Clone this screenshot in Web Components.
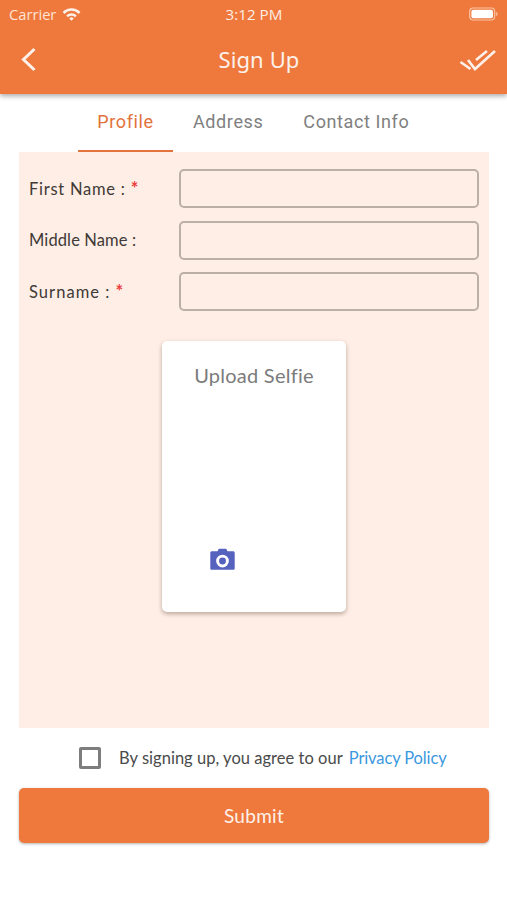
<!DOCTYPE html>
<html><head><meta charset="utf-8">
<style>html,body{margin:0;padding:0;background:#fff}body{width:507px;height:900px;overflow:hidden;font-family:Lato,"Noto Sans",sans-serif}</style>
</head><body>
<app-header></app-header>
<tab-bar></tab-bar>
<profile-panel>
  <field-row required style="--ls:.75px">First Name :</field-row>
  <field-row style="--ls:.12px">Middle Name :</field-row>
  <field-row required style="--ls:1.05px">Surname :</field-row>
  <selfie-card></selfie-card>
</profile-panel>
<agree-row></agree-row>
<submit-button>Submit</submit-button>
<script>
function def(name, html){
  customElements.define(name, class extends HTMLElement{
    constructor(){super();this.attachShadow({mode:'open'}).innerHTML=html;}
  });
}
def('app-header',`<style>
:host{display:block;position:relative;z-index:2;height:94px;background:#ef793d;box-shadow:0 2px 5px rgba(0,0,0,.35);color:#fff}
.status{height:28px;padding:0 8px 0 9px;display:grid;grid-template-columns:1fr auto 1fr;align-items:center;font:14px "Open Sans",sans-serif}
.l{display:flex;align-items:center;gap:6px;color:#fde3d3;font-size:14.7px}
.t{font-size:15.2px;font-weight:500;color:#fdeee5}
.r{display:flex;justify-content:flex-end}
.nav{height:66px;display:grid;grid-template-columns:1fr auto 1fr;align-items:center;padding:0 11px 0 20px}
.title{font:22px "Noto Sans",sans-serif;letter-spacing:.1px;color:#fdf1ea;transform:translate(1px,-2px)}
.back{display:block;transform:translateY(-1px)}.check{justify-self:end;display:block}
</style>
<div class="status"><div class="l"><span>Carrier</span>
<svg width="19" height="14" viewBox="0 0 19 14"><path d="M.6 5a12.400 12.400 0 0 1 17.800 0l-1.800 1.900a9.800 9.800 0 0 0-14.200 0z M4.200 8.400a7.600 7.600 0 0 1 10.600 0l-1.800 1.900a5 5 0 0 0-7 0z M7.300 11.400a3.200 3.200 0 0 1 4.400 0l-2.200 2.300z" fill="#fdf1ea"/></svg></div>
<div class="t">3:12 PM</div>
<div class="r"><svg width="30" height="14" viewBox="0 0 30 14"><rect x=".7" y="1" width="25" height="12" rx="3.5" fill="none" stroke="#f9c4a5" stroke-width="1.2"/><rect x="2.4" y="2.7" width="21.6" height="8.6" rx="2" fill="#fff"/><path d="M27.2 5v4c.9-.3 1.4-1 1.4-2s-.5-1.700-1.400-2z" fill="#f9c4a5"/></svg></div></div>
<div class="nav">
<svg class="back" width="17" height="26" viewBox="0 0 17 26"><path d="M14.500 2 3.500 12.500 14.500 23" fill="none" stroke="#fdf1ea" stroke-width="3"/></svg>
<div class="title">Sign Up</div>
<svg class="check" width="38" height="24" viewBox="0 0 38 24"><path d="M2.500 13 12.500 20M10 11 17 20 37 2M18 11 29 2" fill="none" stroke="#fdf1ea" stroke-width="2.600"/></svg>
</div>`);
def('tab-bar',`<style>
:host{display:flex;height:58px;padding-left:78px;box-sizing:border-box;font:18px Roboto,sans-serif;letter-spacing:.6px;color:#808080}
.tab{display:flex;align-items:center;justify-content:center;height:100%;box-sizing:border-box;border-bottom:2px solid transparent;padding-bottom:1px}
.a{width:95px;color:#e2733c;border-bottom-color:#e2733c;margin-right:20px}
.b{margin-right:40px}
</style><div class="tab a">Profile</div><div class="tab b">Address</div><div class="tab">Contact Info</div>`);
def('profile-panel',`<style>
:host{display:block;margin:0 18px 0 19px;height:576px;box-sizing:border-box;background:#feeee6;padding:17px 10px 0 10px}
</style><slot></slot>`);
def('field-row',`<style>
:host{display:grid;grid-template-columns:150px 300px;align-items:center;height:39px;margin-bottom:12.500px;color:#3f3a37}
.lab{white-space:nowrap;font:16.500px/20px Lato,sans-serif;letter-spacing:var(--ls,.5px);transform:translateY(-.5px)}
.req{color:#ee3b3b;margin-left:5px;display:none;font-size:18px;line-height:0;font-weight:700;letter-spacing:0}
:host([required]) .req{display:inline}
.in{height:39px;box-sizing:border-box;border:2px solid #bcafa6;border-radius:5px}
</style><div class="lab"><slot></slot><span class="req">*</span></div><div class="in"></div>`);
def('selfie-card',`<style>
:host{display:flex;flex-direction:column;align-items:flex-start;width:184px;height:271px;margin:30px 0 0 133px;box-sizing:border-box;background:#fff;border-radius:5px;box-shadow:0 2px 4px rgba(90,60,40,.4);padding:21px 0 0 0}
.t{align-self:center;font:20px Lato,sans-serif;letter-spacing:.25px;color:#7b7b7b;line-height:26px}
svg{margin:160px 0 0 48px;display:block}
</style><div class="t">Upload Selfie</div>
<svg width="25" height="23" viewBox="0 0 26 23"><path fill-rule="evenodd" d="M8.500 1.500C8.800.600 9.400.300 10 .300h6c.7 0 1.200.300 1.500 1.200L18.200 3H24c1 0 1.700.7 1.700 1.700v15.800c0 1-.7 1.700-1.700 1.700H2c-1 0-1.700-.7-1.700-1.700V4.700C.3 3.700 1 3 2 3h5.800zM13 6.500a6.600 6.600 0 1 0 0 13.200 6.600 6.600 0 0 0 0-13.200z" fill="#5563bf"/><circle cx="13" cy="13.100" r="3.600" fill="#5563bf"/></svg>`);
def('agree-row',`<style>
:host{display:flex;align-items:center;height:60px;padding-left:79px;font:16.500px Lato,sans-serif;letter-spacing:.03px;color:#4a4a4a}
.box{width:22px;height:22px;box-sizing:border-box;border:3px solid #7d7d7d;border-radius:2px;margin-right:18px;flex:none}
a{color:#3b98e0;margin-left:6px;letter-spacing:-.12px}
</style><div class="box"></div><span>By signing up, you agree to our</span><a>Privacy Policy</a>`);
def('submit-button',`<style>
:host{display:flex;align-items:center;justify-content:center;margin:0 18px 0 19px;height:55px;background:#ef793d;color:#fdf1ea;border-radius:5px;box-shadow:0 1px 3px rgba(0,0,0,.3);font:19px Lato,sans-serif;letter-spacing:.3px}
</style><slot></slot>`);
</script>
</body></html>
